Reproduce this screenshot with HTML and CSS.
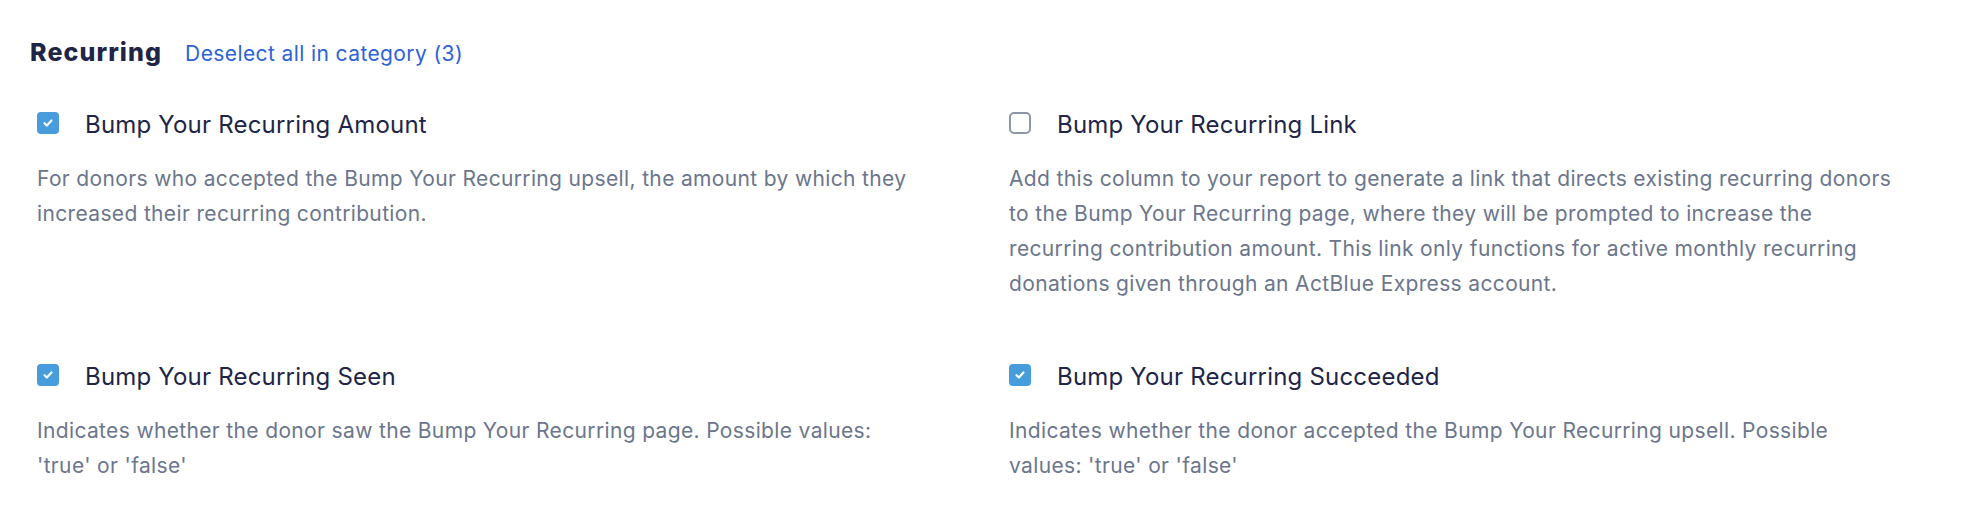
FILE: index.html
```html
<!DOCTYPE html>
<html lang="en">
<head>
<meta charset="utf-8">
<title>Recurring</title>
<link rel="stylesheet" href="styles.css">
</head>
<body>
<section class="category">
  <header class="category-header">
    <h2 class="category-title">Recurring</h2>
    <a class="category-toggle" href="#">Deselect all in category (3)</a>
  </header>
  <div class="field-grid">
    <div class="field">
      <label class="field-label">
        <span class="checkbox is-checked"><svg viewBox="0 0 12 12"><path d="M3 6.2l2 2 4-4.4"/></svg></span>
        <span class="field-name">Bump Your Recurring Amount</span>
      </label>
      <p class="field-desc">For donors who accepted the Bump Your Recurring upsell, the amount by which they increased their recurring contribution.</p>
    </div>
    <div class="field">
      <label class="field-label">
        <span class="checkbox"></span>
        <span class="field-name">Bump Your Recurring Link</span>
      </label>
      <p class="field-desc">Add this column to your report to generate a link that directs existing recurring donors to the Bump Your Recurring page, where they will be prompted to increase the recurring contribution amount. This link only functions for active monthly recurring donations given through an ActBlue Express account.</p>
    </div>
    <div class="field">
      <label class="field-label">
        <span class="checkbox is-checked"><svg viewBox="0 0 12 12"><path d="M3 6.2l2 2 4-4.4"/></svg></span>
        <span class="field-name">Bump Your Recurring Seen</span>
      </label>
      <p class="field-desc">Indicates whether the donor saw the Bump Your Recurring page. Possible values: 'true' or 'false'</p>
    </div>
    <div class="field">
      <label class="field-label">
        <span class="checkbox is-checked"><svg viewBox="0 0 12 12"><path d="M3 6.2l2 2 4-4.4"/></svg></span>
        <span class="field-name">Bump Your Recurring Succeeded</span>
      </label>
      <p class="field-desc">Indicates whether the donor accepted the Bump Your Recurring upsell. Possible values: 'true' or 'false'</p>
    </div>
  </div>
</section>
</body>
</html>
```

FILE: styles.css
```css
html, body {
  margin: 0;
  padding: 0;
  background: #ffffff;
}

body {
  font-family: Inter, "Noto Sans", "Liberation Sans", sans-serif;
  color: #1e2548;
}

.category {
  padding: 36px 77px 0 30px;
}

.category-header {
  display: flex;
  align-items: baseline;
  gap: 23px;
  height: 32px;
  line-height: 32px;
}

.category-title {
  margin: 0;
  font-size: 25px;
  font-weight: 800;
  letter-spacing: 1.1px;
  color: #1e2547;
}

.category-toggle {
  font-size: 21px;
  letter-spacing: 0.4px;
  color: #2c62d6;
  text-decoration: none;
}

.field-grid {
  display: grid;
  grid-template-columns: 1fr 1fr;
  column-gap: 84px;
  row-gap: 60px;
  margin-top: 41px;
  padding-left: 7px;
}

.field-label {
  display: flex;
  align-items: center;
  gap: 26px;
  height: 32px;
}

.checkbox {
  box-sizing: border-box;
  flex: none;
  width: 22px;
  height: 22px;
  margin-top: -4px;
  border: 2.5px solid #8d96a8;
  border-radius: 5px;
  background: #ffffff;
  display: flex;
  align-items: center;
  justify-content: center;
}

.checkbox.is-checked {
  border: none;
  border-radius: 4px;
  background: #479ddb;
}

.checkbox svg {
  width: 14px;
  height: 14px;
  fill: none;
  stroke: #ffffff;
  stroke-width: 1.8;
  stroke-linecap: round;
  stroke-linejoin: round;
}

.field-name {
  font-size: 24px;
  line-height: 32px;
  letter-spacing: 0.2px;
  color: #1e2548;
}

.field-desc {
  margin: 20px 0 0;
  font-size: 21px;
  line-height: 35px;
  letter-spacing: 0.35px;
  color: #6b768c;
}
```
